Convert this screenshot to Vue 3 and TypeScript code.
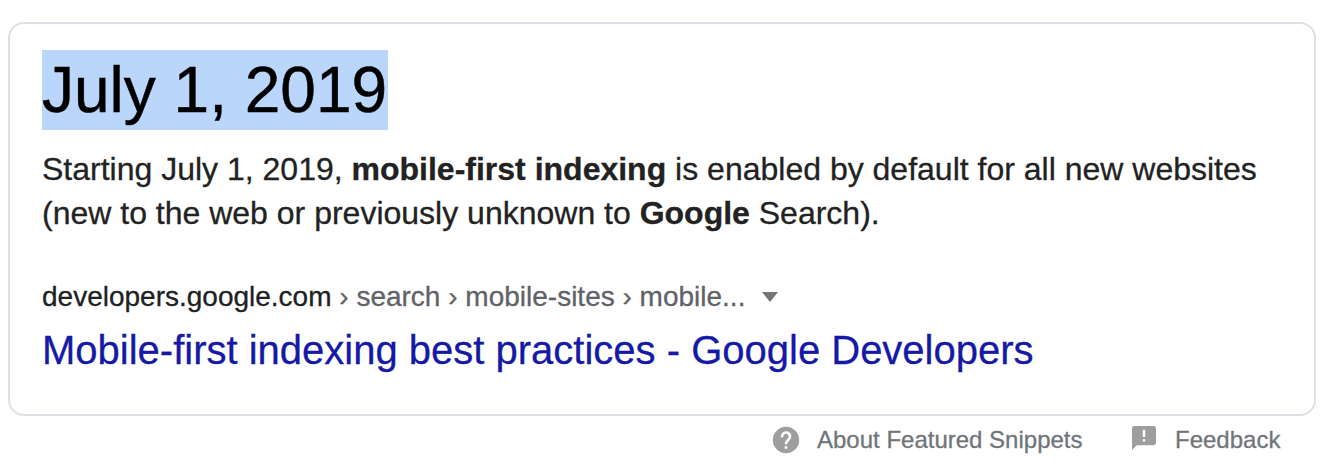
<script setup lang="ts">
const crumbs: string[] = ['search', 'mobile-sites', 'mobile...']
</script>

<template>
  <main class="page">
    <article class="card">
      <div><span class="answer">July 1, 2019</span></div>
      <div class="description">
        <div>Starting July 1, 2019, <b>mobile-first indexing</b> is enabled by default for all new websites</div>
        <div>(new to the web or previously unknown to <b>Google</b> Search).</div>
      </div>
      <div class="source">
        <cite>developers.google.com<span v-for="c in crumbs" :key="c"> › {{ c }}</span></cite>
        <svg class="caret" width="16" height="10" viewBox="0 0 16 10"><path d="M0 0h16L8 10z" fill="#70757a" /></svg>
      </div>
      <a class="title">Mobile-first indexing best practices - Google Developers</a>
    </article>
    <footer class="footer">
      <svg class="help" width="28" height="28" viewBox="0 0 28 28">
        <circle cx="14" cy="14" r="13.2" fill="#9e9e9e" />
        <path d="M10 11.200C10 5 18 5 18 10.800C18 13.800 14 14.200 14 18.200" fill="none" stroke="#fff" stroke-width="2.600" />
        <path d="M12.700 20.200h2.600v2.600h-2.600z" fill="#fff" />
      </svg>
      <span class="about">About Featured Snippets</span>
      <svg class="flag" width="24" height="24" viewBox="0 0 24 24"><path fill="#9e9e9e" fill-rule="evenodd" d="M2.400 0h19.200A2.400 2.400 0 0 1 24 2.400v14.400a2.400 2.400 0 0 1-2.400 2.400H4.800L0 24V2.400A2.400 2.400 0 0 1 2.400 0zM10.800 3.800v7.200h2.400V3.800zm0 9.400v2.400h2.400v-2.400z" /></svg>
      <span class="feedback">Feedback</span>
    </footer>
  </main>
</template>

<style>
body { background: #fff; }
</style>
<style scoped>
.page { box-sizing: border-box; height: 474px; padding: 22px 10px 0 8px; font-family: "Liberation Sans", Arial, sans-serif; color: #222; overflow: hidden; white-space: nowrap; -webkit-text-stroke: 0.3px currentColor; }
.card { box-sizing: border-box; height: 394px; border: 2px solid #dfe0e5; border-radius: 16px; padding: 26px 32px 0; }
.answer { display: inline-block; width: 346px; height: 80px; line-height: 80px; font-size: 64px; background: #bad6fb; color: #000; -webkit-text-stroke-width: 0.5px; }
.description { margin-top: 17px; font-size: 32px; line-height: 44px; }
.source { display: flex; align-items: center; margin-top: 45px; height: 34px; font-size: 28px; color: #202124; }
cite { font-style: normal; }
cite span { color: #5f6368; }
.caret { margin-left: 17px; }
.title { display: block; margin-top: 10px; font-size: 40px; line-height: 52px; color: #1519a6; }
.footer { display: flex; align-items: center; height: 48px; padding-left: 764px; font-size: 24px; color: #70757a; }
.about { margin-left: 17px; width: 266px; }
.flag { margin: 0 0 4px 49px; }
.feedback { margin-left: 19px; }
</style>
